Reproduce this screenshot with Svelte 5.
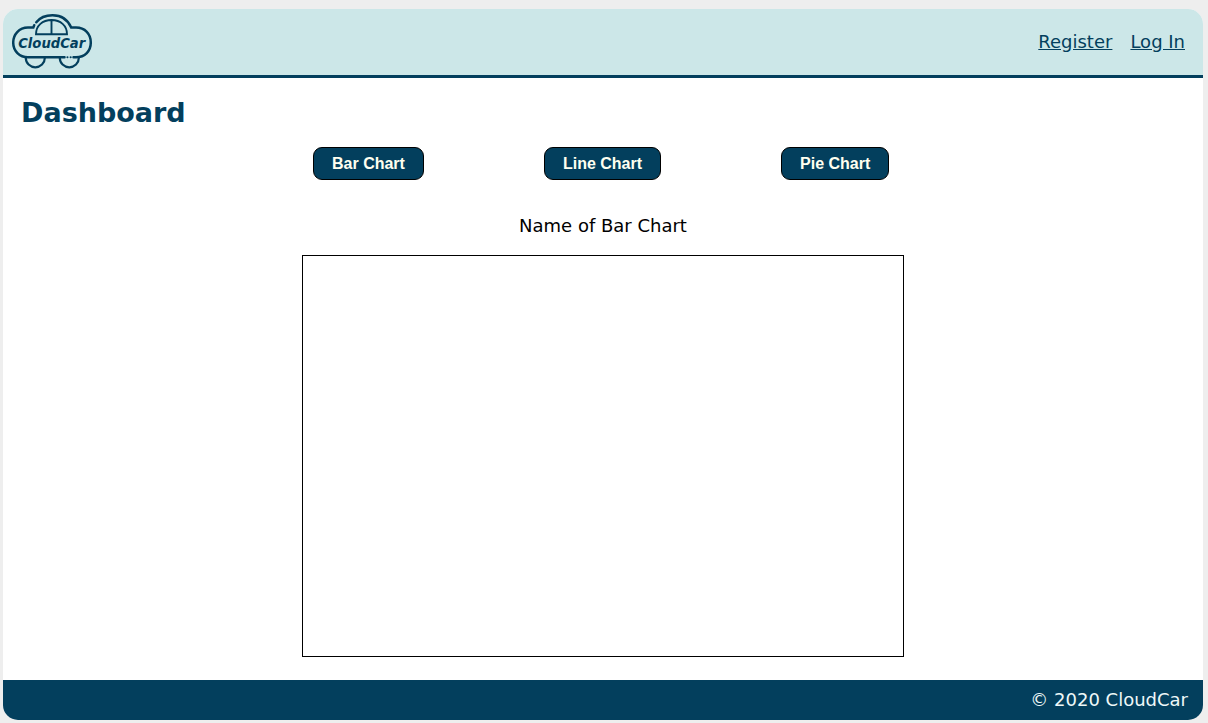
<script>
  const charts = ['Bar Chart', 'Line Chart', 'Pie Chart'];
  let selected = $state('Bar Chart');
</script>

<div class="page">
  <header>
    <svg class="logo" width="84" height="60" viewBox="10 10 84 60" role="img" aria-label="CloudCar">
      <g fill="none" stroke="#033f5d" stroke-width="2.5" stroke-linecap="round">
        <path d="M34.2 25.2L33.3 27.6H28C19 27.6 13.2 34.5 13.2 42.5C13.2 51 19.5 57.2 28 57.2H64.5" />
        <path d="M73.5 57.2H76C85 57.2 90.8 51 90.8 42.5C90.8 34 85 27.6 76 27.6H71.2C67.8 19.5 61 15.2 52.5 15.2C45.5 15.2 39.8 17.7 36.3 22.2" />
        <path stroke-width="2" d="M67.4 57.3H67.5M70.6 57.3H70.7" />
        <path stroke-width="2.2" d="M25.8 58A9.5 9.3 0 0 0 44.8 58M59.8 58A9.5 9.3 0 0 0 78.8 58" />
        <path stroke-width="1.9" d="M36 34.2C36 25.5 42.5 20 51.6 20C60.5 20 67 25.5 67 34.2ZM51.5 20V34" />
      </g>
      <text x="18.2" y="48.4" textLength="67" lengthAdjust="spacingAndGlyphs">CloudCar</text>
    </svg>
    <nav>
      <a href="#register">Register</a>
      <a href="#login">Log In</a>
    </nav>
  </header>
  <main>
    <h1>Dashboard</h1>
    <div class="buttons">
      {#each charts as chart}
        <button onclick={() => (selected = chart)}>{chart}</button>
      {/each}
    </div>
    <p>Name of {selected}</p>
    <div class="chart"></div>
  </main>
  <footer>© 2020 CloudCar</footer>
</div>

<style>
  :global(body) {
    background: #eee;
    overflow: hidden;
  }
  .page {
    box-sizing: border-box;
    width: 1200px;
    height: 711px;
    margin: 9px 0 0 3px;
    display: flex;
    flex-direction: column;
    border-radius: 15px;
    overflow: hidden;
    background: #fff;
    font: 18px/21px "DejaVu Sans", sans-serif;
  }
  :global(#app) {
    display: flow-root;
    height: 723px;
  }
  header {
    box-sizing: border-box;
    height: 69px;
    flex: none;
    display: flex;
    justify-content: space-between;
    align-items: center;
    padding: 0 18px 0 7px;
    background: #cce7e8;
    border-bottom: 3px solid #033f5d;
  }
  .logo {
    display: block;
    margin-bottom: 4px;
  }
  .logo text {
    font: italic bold 13.4px "DejaVu Sans", sans-serif;
    fill: #033f5d;
  }
  nav {
    display: flex;
    gap: 18px;
    margin-bottom: 2px;
  }
  a {
    color: #033f5d;
  }
  main {
    flex: 1;
    display: flex;
    flex-direction: column;
  }
  h1 {
    margin: 18px 0 0 18px;
    font-size: 27px;
    line-height: 33px;
    color: #033f5d;
  }
  .buttons {
    display: flex;
    gap: 120px;
    margin: 18px 0 0 310px;
  }
  button {
    box-sizing: border-box;
    height: 33px;
    padding: 0 18px;
    border: 1px solid #000;
    border-radius: 9px;
    background: #033f5d;
    color: #fffff0;
    font: bold 16px "Liberation Sans", Arial, sans-serif;
    cursor: pointer;
  }
  p {
    margin: 35px 0 0;
    text-align: center;
    color: #000;
  }
  .chart {
    width: 600px;
    height: 400px;
    margin: 19px auto 0;
    border: 1px solid #000;
  }
  footer {
    flex: none;
    height: 40px;
    padding-right: 15px;
    background: #033f5d;
    color: #eef8f8;
    line-height: 40px;
    text-align: right;
  }
</style>
